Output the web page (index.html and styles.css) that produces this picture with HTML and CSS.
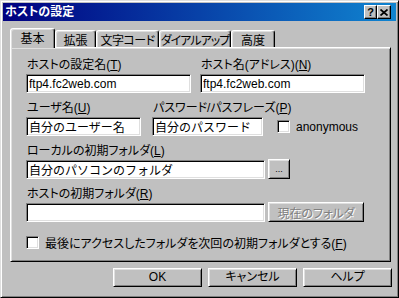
FILE: index.html
```html
<!DOCTYPE html>
<html lang="ja">
<head>
  <meta charset="UTF-8">
  <meta name="viewport" content="width=device-width, initial-scale=1.0">
  <title>ホストの設定</title>
  <link rel="stylesheet" href="styles.css">
</head>
<body>
  <div class="window">
    <div class="titlebar">
      <span class="title">ホストの設定</span>
      <div class="title-buttons">
        <span class="tbtn help">?</span>
        <span class="tbtn close">
          <svg width="8" height="7" viewBox="0 0 8 7"><path d="M0.5 0.5 L7.5 6.5 M7.5 0.5 L0.5 6.5" stroke="#000" stroke-width="1.7"/></svg>
        </span>
      </div>
    </div>

    <div class="tabs">
      <div class="tab active t-basic">基本</div>
      <div class="tab t-ext">拡張</div>
      <div class="tab t-code">文字コード</div>
      <div class="tab t-dial">ダイアルアップ</div>
      <div class="tab t-adv">高度</div>
    </div>

    <div class="panel">
      <div class="row">
        <div class="field w-name">
          <label for="hostName">ホストの設定名(<u>T</u>)</label>
          <input class="edit" id="hostName" type="text" value="ftp4.fc2web.com">
        </div>
        <div class="field w-addr">
          <label for="hostAddr">ホスト名(アドレス)(<u>N</u>)</label>
          <input class="edit" id="hostAddr" type="text" value="ftp4.fc2web.com">
        </div>
      </div>

      <div class="row">
        <div class="field w-user">
          <label for="user">ユーザ名(<u>U</u>)</label>
          <input class="edit" id="user" type="text" value="自分のユーザー名">
        </div>
        <div class="field w-pass">
          <label for="pass">パスワード/パスフレーズ(<u>P</u>)</label>
          <input class="edit" id="pass" type="text" value="自分のパスワード">
        </div>
        <div class="check anon">
          <span class="box"></span>
          <span>anonymous</span>
        </div>
      </div>

      <div class="row">
        <div class="field">
          <label for="local">ローカルの初期フォルダ(<u>L</u>)</label>
          <div class="with-btn">
            <input class="edit w-long" id="local" type="text" value="自分のパソコンのフォルダ">
            <button class="btn small">...</button>
          </div>
        </div>
      </div>

      <div class="row">
        <div class="field">
          <label for="remote">ホストの初期フォルダ(<u>R</u>)</label>
          <div class="with-btn">
            <input class="edit w-long" id="remote" type="text" value="">
            <button class="btn current" disabled>現在のフォルダ</button>
          </div>
        </div>
      </div>

      <div class="check last">
        <span class="box"></span>
        <span>最後にアクセスしたフォルダを次回の初期フォルダとする(<u>F</u>)</span>
      </div>
    </div>

    <div class="actions">
      <button class="btn action">OK</button>
      <button class="btn action">キャンセル</button>
      <button class="btn action">ヘルプ</button>
    </div>
  </div>
</body>
</html>
```

FILE: styles.css
```css
* {
  box-sizing: border-box;
}
body {
  margin: 0;
  font-family: "Liberation Sans", "Noto Sans CJK JP", sans-serif;
  font-size: 12px;
  font-feature-settings: "palt";
  color: #000;
  background-color: #c0c0c0;
}
.window {
  width: 399px;
  height: 298px;
  padding: 2px;
  background: #c0c0c0;
  border: 1px solid;
  border-color: #dfdfdf #000 #000 #dfdfdf;
  box-shadow: inset 1px 1px #fff, inset -1px -1px #808080;
}

/* title bar */
.titlebar {
  height: 18px;
  display: flex;
  align-items: center;
  justify-content: space-between;
  padding: 0 5px 0 2px;
  background: linear-gradient(to right, #000080, #1084d0);
}
.title {
  color: #fff;
  font-weight: bold;
  line-height: 14px;
}
.title-buttons {
  display: flex;
}
.tbtn {
  width: 14px;
  height: 14px;
  display: flex;
  align-items: center;
  justify-content: center;
  background: #c0c0c0;
  border: 1px solid;
  border-color: #fff #000 #000 #fff;
  box-shadow: inset -1px -1px #808080;
  font-weight: bold;
  font-size: 11px;
  line-height: 12px;
}
.tbtn.help {
  width: 13px;
}

/* tabs */
.tabs {
  display: flex;
  align-items: flex-end;
  height: 19px;
  margin: 7px 0 0 7px;
}
.tab {
  height: 17px;
  display: flex;
  align-items: center;
  justify-content: center;
  padding-top: 1px;
  white-space: nowrap;
  border: 1px solid;
  border-bottom: none;
  border-color: #fff #000 transparent #fff;
  border-radius: 3px 3px 0 0;
  box-shadow: inset -1px 0 #808080, inset 1px 1px #dfdfdf;
  background: #c0c0c0;
}
.tab.active {
  height: 20px;
  margin-bottom: -1px;
  padding-top: 0;
  padding-bottom: 3px;
  position: relative;
  z-index: 1;
}
.t-basic { width: 45px; }
.t-ext { width: 41px; }
.t-code { width: 63px; letter-spacing: -0.5px; }
.t-dial { width: 72px; letter-spacing: -1px; }
.t-adv { width: 44px; }

/* panel */
.panel {
  width: 381px;
  height: 215px;
  margin-left: 7px;
  padding: 10px 0 0 15px;
  border: 1px solid;
  border-color: #fff #000 #000 #fff;
  box-shadow: inset 1px 1px #dfdfdf, inset -1px -1px #808080;
}
.row {
  display: flex;
  align-items: flex-end;
  margin-bottom: 8px;
}
.field label {
  display: block;
  height: 14px;
  line-height: 14px;
  margin-bottom: 2px;
  padding-left: 1px;
  white-space: nowrap;
}
.edit {
  display: block;
  height: 19px;
  margin: 0;
  padding: 0 2px;
  font: inherit;
  font-feature-settings: normal;
  color: #000;
  background: #fff;
  border: 1px solid;
  border-color: #808080 #fff #fff #808080;
  box-shadow: inset 1px 1px #000, inset -1px -1px #dfdfdf;
  outline: none;
}
.w-name { width: 165px; }
.w-addr { width: 165px; margin-left: 9px; }
.w-name .edit, .w-addr .edit { width: 165px; }
.w-user { width: 115px; }
.w-user .edit { width: 115px; }
.w-pass { width: 111px; margin-left: 11px; }
.w-pass .edit { width: 111px; }
.w-long { width: 239px; }

.with-btn {
  display: flex;
  align-items: flex-start;
  gap: 3px;
}

/* checkboxes */
.check {
  display: flex;
  align-items: center;
  gap: 6px;
  white-space: nowrap;
}
.box {
  width: 13px;
  height: 13px;
  background: #fff;
  border: 1px solid;
  border-color: #808080 #fff #fff #808080;
  box-shadow: inset 1px 1px #000, inset -1px -1px #dfdfdf;
}
.anon {
  height: 19px;
  margin-left: 14px;
}
.last {
  margin-top: 12px;
}

/* buttons */
.btn {
  margin: 0;
  padding: 0;
  font: inherit;
  color: #000;
  background: #c0c0c0;
  border: 1px solid;
  border-color: #fff #000 #000 #fff;
  box-shadow: inset 1px 1px #dfdfdf, inset -1px -1px #808080;
}
.btn.small {
  width: 22px;
  height: 20px;
  margin-top: -1px;
  font-size: 9px;
}
.btn.current {
  width: 96px;
  height: 20px;
  margin-top: -1px;
  color: #808080;
  text-shadow: 1px 1px #fff;
}
.actions {
  display: flex;
  justify-content: flex-end;
  gap: 6px;
  margin-top: 6px;
  padding-right: 4px;
}
.btn.action {
  width: 89px;
  height: 19px;
  line-height: 15px;
}
```
